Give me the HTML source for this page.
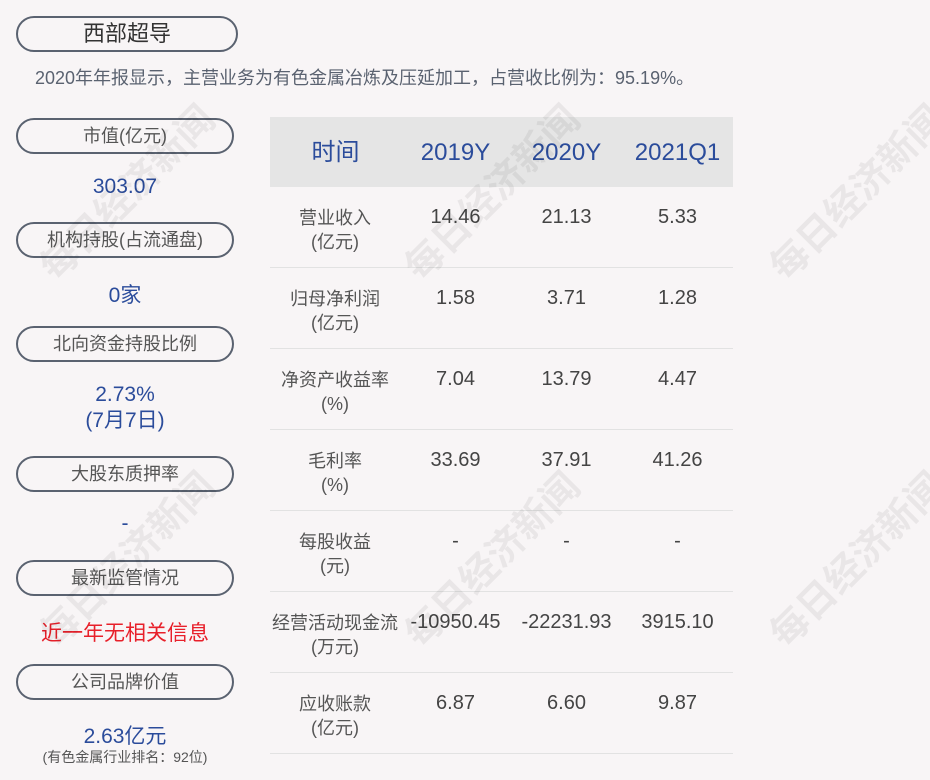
<!DOCTYPE html>
<html><head><meta charset="utf-8"><style>
*{margin:0;padding:0;box-sizing:border-box}
body{width:930px;height:780px;background:#f8f5f6;font-family:"Liberation Sans","Noto Sans CJK SC",sans-serif;position:relative;overflow:hidden;color:#555}
.a{position:absolute}
.pill{position:absolute;left:16px;width:218px;height:36px;border:2px solid #5a6270;border-radius:18px;text-align:center;line-height:32px;font-size:18px;color:#555}
.v{position:absolute;left:16px;width:218px;text-align:center;color:#2b4c9b;font-size:21px}
.wm{position:absolute;font-size:38px;font-weight:bold;color:rgba(0,0,0,0.06);transform:rotate(-45deg);white-space:nowrap;width:260px;text-align:center}
.hd{position:absolute;left:270px;top:117px;width:463px;height:70px;background:#e5e5e5}
.hd span{position:absolute;top:1px;line-height:70px;color:#2b4c9b;font-size:24px;text-align:center;width:111px}
.row{position:absolute;left:270px;width:463px;height:81px;border-bottom:1px solid #e2e2e2}
.row .l{position:absolute;left:0;width:130px;text-align:center;top:19px;font-size:18px;line-height:24px;color:#555}
.row .n{position:absolute;top:19px;width:111px;text-align:center;font-size:20px;color:#444}
</style></head><body>
<div class="pill" style="top:16px;width:222px;font-size:22px;color:#333">西部超导</div>
<div class="a" style="left:35px;top:64px;font-size:18px;color:#5a6270">2020年年报显示，主营业务为有色金属冶炼及压延加工，占营收比例为：95.19%。</div>

<div class="pill" style="top:118px">市值(亿元)</div>
<div class="v" style="top:175px">303.07</div>
<div class="pill" style="top:222px">机构持股(占流通盘)</div>
<div class="v" style="top:279px">0家</div>
<div class="pill" style="top:326px">北向资金持股比例</div>
<div class="v" style="top:382px;line-height:26px">2.73%<br>(7月7日)</div>
<div class="pill" style="top:456px">大股东质押率</div>
<div class="v" style="top:512px">-</div>
<div class="pill" style="top:560px">最新监管情况</div>
<div class="v" style="top:617px;color:#e8202a">近一年无相关信息</div>
<div class="pill" style="top:664px">公司品牌价值</div>
<div class="v" style="top:720px">2.63亿元</div>
<div class="a" style="left:16px;width:218px;text-align:center;top:747px;font-size:14px;color:#555">(有色金属行业排名：92位)</div>

<div class="hd"><span style="left:10px">时间</span><span style="left:130px">2019Y</span><span style="left:241px">2020Y</span><span style="left:352px">2021Q1</span></div>

<div class="row" style="top:187px"><div class="l">营业收入<br>(亿元)</div><div class="n" style="left:130px">14.46</div><div class="n" style="left:241px">21.13</div><div class="n" style="left:352px">5.33</div></div>
<div class="row" style="top:268px"><div class="l">归母净利润<br>(亿元)</div><div class="n" style="left:130px">1.58</div><div class="n" style="left:241px">3.71</div><div class="n" style="left:352px">1.28</div></div>
<div class="row" style="top:349px"><div class="l">净资产收益率<br>(%)</div><div class="n" style="left:130px">7.04</div><div class="n" style="left:241px">13.79</div><div class="n" style="left:352px">4.47</div></div>
<div class="row" style="top:430px"><div class="l">毛利率<br>(%)</div><div class="n" style="left:130px">33.69</div><div class="n" style="left:241px">37.91</div><div class="n" style="left:352px">41.26</div></div>
<div class="row" style="top:511px"><div class="l">每股收益<br>(元)</div><div class="n" style="left:130px">-</div><div class="n" style="left:241px">-</div><div class="n" style="left:352px">-</div></div>
<div class="row" style="top:592px"><div class="l">经营活动现金流<br>(万元)</div><div class="n" style="left:130px">-10950.45</div><div class="n" style="left:241px">-22231.93</div><div class="n" style="left:352px">3915.10</div></div>
<div class="row" style="top:673px"><div class="l">应收账款<br>(亿元)</div><div class="n" style="left:130px">6.87</div><div class="n" style="left:241px">6.60</div><div class="n" style="left:352px">9.87</div></div>

<div class="wm" style="left:-5px;top:163px">每日经济新闻</div>
<div class="wm" style="left:360px;top:163px">每日经济新闻</div>
<div class="wm" style="left:725px;top:163px">每日经济新闻</div>
<div class="wm" style="left:-5px;top:530px">每日经济新闻</div>
<div class="wm" style="left:360px;top:530px">每日经济新闻</div>
<div class="wm" style="left:725px;top:530px">每日经济新闻</div>
</body></html>
